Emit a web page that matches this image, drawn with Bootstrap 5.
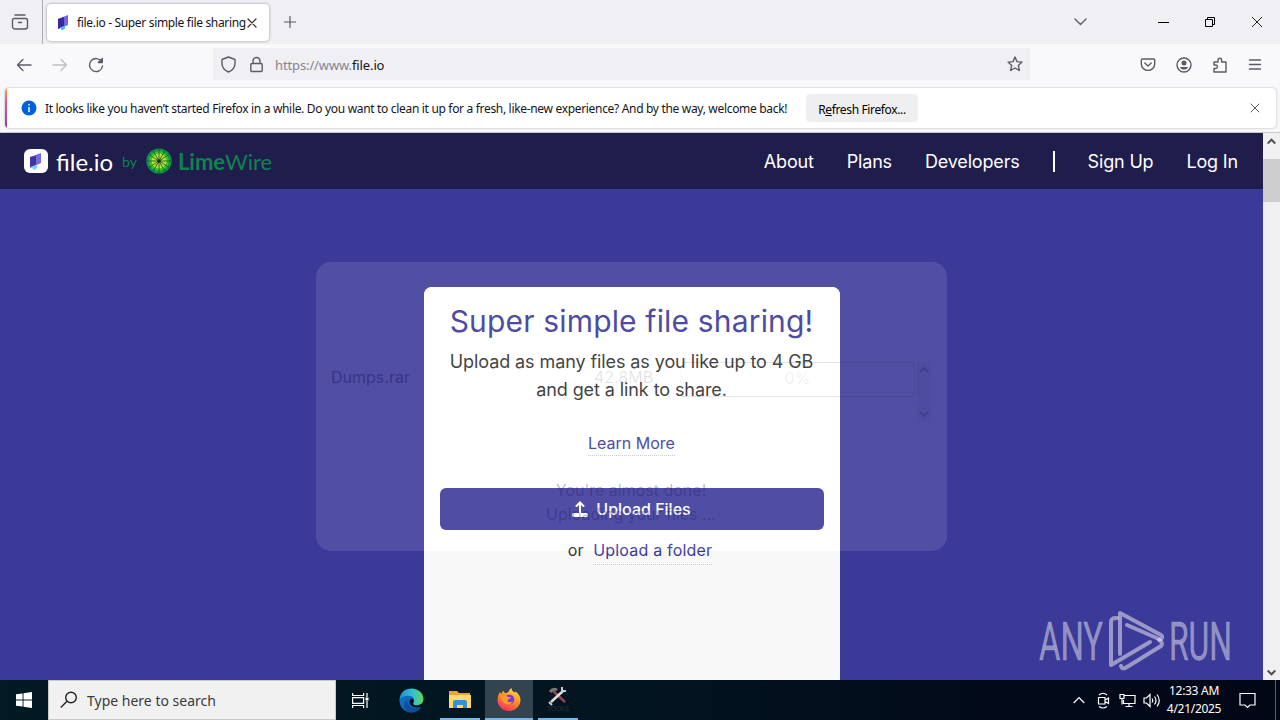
<!DOCTYPE html>
<html lang="en">
<head>
  <meta charset="UTF-8">
  <meta name="viewport" content="width=device-width, initial-scale=1.0">
  <title>file.io - Super simple file sharing</title>
  <link href="https://cdn.jsdelivr.net/npm/bootstrap@5.3.0/dist/css/bootstrap.min.css" rel="stylesheet">
  <style>
    body {
      width: 1280px;
      height: 720px;
      overflow: hidden;
      font-family: "Noto Sans", sans-serif;
      font-size: 12px;
      color: #15141a;
    }
    svg { display: block; flex: none; }
    .ln { fill: none; stroke: #5b5b66; stroke-width: 1.4; stroke-linecap: round; stroke-linejoin: round; }

    /* Browser tabs */
    .tab-strip { height: 44px; background: #f0eff4; }
    .view-btn { width: 43px; padding-right: 2px; border-right: 1px solid #aaa9b2; }
    .tab-item {
      width: 222px; height: 37px; margin: 4px 0 0 4px; padding: 0 11px 0 8px;
      background: #fff; border-radius: 4px; box-shadow: 0 0 3px rgba(0, 0, 0, .4);
    }
    .tab-title { margin-left: 6px; width: 170px; letter-spacing: -.33px; padding-top: 1px; }
    .win-icons { padding-right: 17px; gap: 35px; }

    /* Toolbar */
    .tool-bar { height: 44px; background: #f9f9fb; padding: 0 17px 0 16px; }
    .nav-btns { width: 197px; gap: 20px; margin-bottom: 2px; }
    .url-box { width: 817px; height: 32px; background: #f0eff4; padding: 0 7px; margin-bottom: 4px; }
    .url-text { font-size: 13px; color: #85848d; letter-spacing: -.12px; padding: 3px 0 0 10px; }
    .tool-icons { gap: 20px; margin: 0 1px 2px 0; }

    /* Notification */
    .notice-wrap { height: 45px; background: #f7f7f9; padding: 0 4px 4px 5px; border-bottom: 1px solid #c9c9cf; }
    .notice {
      height: 40px; background: #fff; border-radius: 4px; padding-right: 16px;
      box-shadow: 0 0 2px rgba(0, 0, 0, .35); overflow: hidden;
    }
    .notice-stripe { width: 2px; height: 40px; background: linear-gradient(#ffa436, #e2528f 35%, #8146b8); }
    .notice-text { width: 743px; margin-left: 8px; white-space: nowrap; letter-spacing: -.32px; padding-top: 2px; }
    .refresh-btn {
      width: 112px; height: 28px; margin-left: 18px; font-size: 12px;
      background: #efeff1; border-radius: 4px; letter-spacing: -.36px;
    }

    /* Site */
    .site { height: 547px; }
    .web-view { width: 1263px; font-family: Inter, sans-serif; }
    .site-head { height: 56px; background: #1f1d4b; padding: 0 25px 0 24px; color: #fff; }
    .logo-box { width: 24px; height: 24px; background: #fff; border-radius: 6px; }
    .logo-name { font: 24px/24px Lato, sans-serif; margin: 2px 0 0 8px; width: 57px; }
    .green { color: #0e8350; font-family: Lato, sans-serif; }
    .lime-name { font-size: 22px; line-height: 24px; margin-left: 6px; padding-top: 1px; }
    .menu { font-size: 18px; gap: 33px; white-space: nowrap; letter-spacing: -.17px; }
    .menu-bar { width: 2px; height: 21px; background: #fff; }
    .hero { height: 491px; background: #3c3a98; }
    .share-box {
      width: 416px; height: 420px; margin-top: 98px; padding: 0 16px;
      background: #f8f8f8; border-radius: 8px 8px 0 0; color: #2d2d2d;
    }
    .share-top { height: 264px; margin: 0 -16px; padding: 16px 16px 0; background: #fff; border-radius: 8px 8px 0 0; }
    .share-top h1 { font-size: 30px; line-height: 36px; color: #37359a; margin: 0 0 9px; letter-spacing: .17px; white-space: nowrap; }
    .share-top p { font-size: 18px; line-height: 28px; margin: 0 0 27px; white-space: nowrap; letter-spacing: -.09px; }
    .dotted { font-size: 16px; color: #37359a; border-bottom: 1px dotted #c4c4d6; line-height: 24px; text-decoration: none; }
    .up-btn { height: 42px; margin-top: 32px; background: #3b3999; color: #fff; border-radius: 6px; font-size: 16px; font-weight: 500; }
    .or-row { margin: -15px -17px 0 0; font-size: 16px; line-height: 28px; letter-spacing: .2px; }
    .or-row .dotted { line-height: 27px; }

    /* Fading upload panel over the card */
    .fade-panel {
      top: 73px; left: 316px; width: 631px; height: 289px; border-radius: 15px;
      background: rgba(255, 255, 255, .11); color: rgba(30, 24, 110, .5); font-size: 16px;
      padding: 100px 16px 0 15px;
    }
    .fade-row { height: 60px; }
    .size-cell { color: rgba(20, 20, 30, .13); }
    .bar-cell { width: 235px; height: 35px; border: 1px solid rgba(20, 15, 50, .11); border-left-color: rgba(20, 15, 50, .02); border-radius: 4px; color: rgba(20, 20, 30, .08); padding-bottom: 3px; }
    .fade-scroll { width: 14px; height: 60px; background: rgba(20, 15, 90, .04); }
    .fade-msg { margin-top: 56px; line-height: 24px; color: rgba(20, 15, 80, .3); }
    .watermark { right: 28px; bottom: 6px; overflow: visible; }

    .scroll-track { width: 17px; background: #f0f0f0; }
    .scroll-thumb { height: 43px; background: #cdcdcd; margin-top: 9px; }

    /* Taskbar */
    .task-bar { height: 40px; background: linear-gradient(90deg, #021a23, #02141f 50%, #020a1a 78%, #020716); color: #fff; }
    .start-btn { width: 48px; }
    .search-box { width: 288px; height: 40px; background: #f1f1f1; border: 1px solid #c8c8c8; color: #3a3a3a; font-size: 14px; padding-left: 11px; gap: 9px; }
    .task-item { width: 48px; height: 40px; }
    .running { width: 40px; border-bottom: 2px solid #76b9ed; }
    .on { width: 48px; background: #33444e; }
    .clock { width: 64px; font-size: 12px; line-height: 18px; letter-spacing: -.3px; }
    .desk-edge { width: 1px; height: 40px; background: #59606b; }
  </style>
</head>
<body class="d-flex flex-column">

  <!-- Tabs -->
  <div class="tab-strip d-flex">
    <div class="view-btn d-flex align-items-center justify-content-center">
      <svg width="18" height="18" viewBox="0 0 18 18" class="ln"><path d="M4 2h10M3.500 5.500h11a2 2 0 0 1 2 2v6a2.500 2.500 0 0 1-2.500 2.500h-10a2.500 2.500 0 0 1-2.500-2.500v-6a2 2 0 0 1 2-2zM7.500 9.500h3"/></svg>
    </div>
    <div class="tab-item d-flex align-items-center">
      <svg width="16" height="18" viewBox="0 0 16 18"><path d="M3 5l10-4v10l-10 4z" fill="#7a62dd"/><path d="M3 5l6-2v9l-6 3z" fill="#39279b"/><path d="M5 13.500l5-2v3l-3 2z" fill="#45b7e8"/></svg>
      <span class="tab-title text-nowrap">file.io - Super simple file sharing</span>
      <svg width="10" height="10" viewBox="0 0 10 10" class="ln" style="stroke:#333;stroke-width:1.200"><path d="M1 1l8 8M9 1l-8 8"/></svg>
    </div>
    <div class="d-flex align-items-center" style="padding-left:15px">
      <svg width="12" height="12" viewBox="0 0 12 12" class="ln" style="stroke-width:1.200"><path d="M6 .5v11M.5 6h11"/></svg>
    </div>
    <div class="win-icons d-flex align-items-center ms-auto">
      <svg width="13" height="8" viewBox="0 0 13 8" class="ln" style="margin-right:36px"><path d="M1 1l5.500 5.500L12 1"/></svg>
      <svg width="11" height="11" viewBox="0 0 11 11"><path d="M0 5.500h11" stroke="#000"/></svg>
      <svg width="12" height="12" viewBox="0 0 12 12" fill="none" stroke="#000"><path d="M1.500 3.500h7v7h-7zM3.500 3.500v-2h7v7h-2"/></svg>
      <svg width="12" height="12" viewBox="0 0 12 12" stroke="#222"><path d="M1 1l10 10M11 1L1 11"/></svg>
    </div>
  </div>

  <!-- Toolbar -->
  <div class="tool-bar d-flex align-items-center">
    <div class="nav-btns d-flex align-items-center">
      <svg width="16" height="16" viewBox="0 0 16 16" class="ln"><path d="M15 8H1.500M7 2.500L1.500 8 7 13.500"/></svg>
      <svg width="16" height="16" viewBox="0 0 16 16" class="ln" style="stroke:#bfbfc4"><path d="M1 8h13.500M9 2.500L14.500 8 9 13.500"/></svg>
      <svg width="16" height="16" viewBox="0 0 16 16" class="ln"><path d="M13.800 5A6.500 6.500 0 1 0 14.500 9M14.300 1.500v4H10.300z"/></svg>
    </div>
    <div class="url-box d-flex align-items-center">
      <svg width="17" height="17" viewBox="0 0 17 17" class="ln"><path d="M8.500 1L15 3.500v4c0 4-3 7-6.500 8.500C5 14.500 2 11.500 2 7.500v-4z"/></svg>
      <svg width="17" height="17" viewBox="0 0 17 17" class="ln" style="margin-left:11px"><path d="M5 7.500V5a3.500 3.500 0 0 1 7 0v2.500M4 7.500h9a1.200 1.200 0 0 1 1.200 1.200v5.600a1.200 1.200 0 0 1-1.200 1.200H4a1.200 1.200 0 0 1-1.200-1.200V8.700A1.200 1.200 0 0 1 4 7.500z"/></svg>
      <span class="url-text">https://www.<span style="color:#15141a">file.io</span></span>
      <svg width="16" height="16" viewBox="0 0 16 16" class="ln ms-auto"><path d="M8 1l2 4.600 5 .5-3.700 3.300L12.400 14.500 8 12l-4.400 2.500 1.100-5.100L1 6.100l5-.5z"/></svg>
    </div>
    <div class="tool-icons d-flex align-items-center ms-auto">
      <svg width="16" height="16" viewBox="0 0 16 16" class="ln"><path d="M2.500 2h11a1.200 1.200 0 0 1 1.200 1.200v3.500a6.700 6.700 0 0 1-13.400 0V3.200a1.200 1.200 0 0 1 1.200-1.200zM4.800 6L8 9l3.200-3"/></svg>
      <svg width="16" height="16" viewBox="0 0 16 16" class="ln"><circle cx="8" cy="8" r="7"/><circle cx="8" cy="6" r="2.500" fill="#5b5b66" stroke="none"/><path d="M4 10h8c-.5 2-2 2.500-4 2.500S4.500 12 4 10z" fill="#5b5b66" stroke="none"/></svg>
      <svg width="16" height="16" viewBox="0 0 16 16" class="ln"><path d="M2 5h4V3a1.800 1.800 0 0 1 3.600 0v2H14v10H2v-3.500h1.700a1.700 1.700 0 0 0 0-3.500H2z"/></svg>
      <svg width="14" height="14" viewBox="0 0 14 14" class="ln"><path d="M1.500 2h11M1.500 6.500h11M1.500 11h11"/></svg>
    </div>
  </div>

  <!-- Notification -->
  <div class="notice-wrap">
    <div class="notice d-flex align-items-center">
      <div class="notice-stripe"></div>
      <svg width="16" height="16" viewBox="0 0 16 16" style="margin-left:14px"><circle cx="8" cy="8" r="7.500" fill="#0060df"/><path d="M8 7v5M8 4v1.600" stroke="#fff" stroke-width="1.500"/></svg>
      <span class="notice-text">It looks like you haven’t started Firefox in a while. Do you want to clean it up for a fresh, like-new experience? And by the way, welcome back!</span>
      <button type="button" class="refresh-btn border-0 p-0 pt-1">R<u>e</u>fresh Firefox...</button>
      <svg width="10" height="10" viewBox="0 0 10 10" class="ln ms-auto" style="stroke-width:1"><path d="M1 1l8 8M9 1L1 9"/></svg>
    </div>
  </div>

  <!-- Site -->
  <div class="site d-flex">
    <div class="web-view">
      <div class="site-head d-flex align-items-center">
        <div class="logo-box d-flex align-items-center justify-content-center">
          <svg width="12" height="17" viewBox="0 0 12 17"><path d="M0 4l11-4v10L0 15z" fill="#7569e4"/><path d="M0 4l6-1v9l-6 2z" fill="#44369f"/><path d="M1 14l6-2.500V15l-3 2z" fill="#78d6ef"/></svg>
        </div>
        <span class="logo-name">file.io</span>
        <span class="green" style="font-size:14px;margin-left:9px">by</span>
        <svg width="26" height="26" viewBox="-13 -13 26 26" style="margin-left:9px">
          <circle r="11" fill="#38c520"/><circle r="7.500" fill="#b4e337"/>
          <circle r="11.300" fill="none" stroke="#129447" stroke-width="2.600"/>
          <path d="M0-12V12M-12 0H12M-10-6.500L10 6.500M-10 6.500L10-6.500M-6-10.500L6 10.500M-6 10.500L6-10.500" stroke="#154b2b" stroke-width=".8"/>
          <circle r="1.800" fill="#1c3020"/>
        </svg>
        <span class="green lime-name"><b>Lime</b>Wire</span>
        <div class="menu d-flex align-items-center ms-auto">
          <span>About</span>
          <span>Plans</span>
          <span>Developers</span>
          <div class="menu-bar"></div>
          <span>Sign Up</span>
          <span>Log In</span>
        </div>
      </div>

      <div class="hero position-relative overflow-hidden d-flex justify-content-center align-items-start">
        <div class="share-box text-center">
          <div class="share-top">
            <h1 class="fw-normal">Super simple file sharing!</h1>
            <p>Upload as many files as you like up to 4 GB<br>and get a link to share.</p>
            <a class="dotted d-inline-block" href="#">Learn More</a>
            <div class="up-btn d-flex align-items-center justify-content-center gap-2">
              <svg width="16" height="17" viewBox="0 0 16 17" fill="none" stroke="#fff" stroke-linecap="round"><path d="M8 12V2M4.500 5L8 1.500 11.500 5" stroke-width="2"/><path d="M2 14h12" stroke-width="4"/></svg>
              <span>Upload Files</span>
            </div>
          </div>
          <div class="or-row position-relative">or&nbsp; <a class="dotted d-inline-block" href="#">Upload a folder</a></div>
        </div>

        <div class="fade-panel position-absolute">
          <div class="fade-row d-flex">
            <span style="width:263px;line-height:31px">Dumps.rar</span>
            <span class="size-cell" style="width:86px;line-height:31px">42.8MB</span>
            <div class="bar-cell d-flex align-items-center justify-content-center">0%</div>
            <div class="fade-scroll d-flex flex-column justify-content-between align-items-center ms-auto py-1">
              <svg width="10" height="7" viewBox="0 0 10 7" fill="none" stroke="#3c3a88" stroke-width="1.500"><path d="M1 6l4-4 4 4"/></svg>
              <svg width="10" height="7" viewBox="0 0 10 7" fill="none" stroke="#3c3a88" stroke-width="1.500"><path d="M1 1l4 4 4-4"/></svg>
            </div>
          </div>
          <div class="fade-msg text-center">You're almost done!<br>Uploading your files ...</div>
        </div>

        <svg class="watermark position-absolute" width="198" height="64" viewBox="0 0 198 64" fill="#fff" fill-opacity=".45" font-family="Roboto, sans-serif" font-size="53">
          <g stroke="#fff" stroke-opacity=".2" stroke-width=".8">
            <text x="2" y="50" textLength="64" lengthAdjust="spacingAndGlyphs">ANY</text>
            <text x="132" y="50" textLength="63" lengthAdjust="spacingAndGlyphs">RUN</text>
          </g>
          <g fill="none" stroke="#fff" stroke-opacity=".48" stroke-width="4" stroke-linejoin="round" stroke-linecap="round">
            <path d="M80 8c-5 0-6 1-6 5v42l39-23"/>
            <path d="M83 44V3l41 22c2 2 1 5-2 4L90 15"/>
            <path d="M84 56c1 3 3 3 6 1l34-21c2-2 1-4-2-6"/>
          </g>
        </svg>
      </div>
    </div>

    <div class="scroll-track d-flex flex-column align-items-center">
      <svg width="9" height="7" viewBox="0 0 9 7" fill="none" stroke="#505050" stroke-width="2" style="margin-top:5px;margin-bottom:5px"><path d="M.7 5.500l3.800-3.800 3.800 3.800"/></svg>
      <div class="scroll-thumb w-100"></div>
      <svg width="9" height="7" viewBox="0 0 9 7" fill="none" stroke="#505050" stroke-width="2" class="mt-auto mb-1"><path d="M.7 1.500l3.800 3.800 3.800-3.800"/></svg>
    </div>
  </div>

  <!-- Taskbar -->
  <div class="task-bar d-flex align-items-center">
    <div class="start-btn d-flex justify-content-center">
      <svg width="16" height="16" viewBox="0 0 16 16" fill="#fff"><path d="M0 2.300l6.600-.9v6.100H0zM7.500 1.200L16 0v7.500H7.500zM0 8.400h6.600v6.200L0 13.700zM7.500 8.400H16V16l-8.500-1.200z"/></svg>
    </div>
    <div class="search-box d-flex align-items-center">
      <svg width="18" height="18" viewBox="0 0 18 18" fill="none" stroke="#222" stroke-width="1.400"><circle cx="11" cy="6.500" r="5.300"/><path d="M7 10.300L.8 16.500"/></svg>
      <span>Type here to search</span>
    </div>
    <div class="task-item d-flex align-items-center justify-content-center">
      <svg width="17" height="17" viewBox="0 0 17 17" fill="none" stroke="#fff" stroke-width="1.200"><path d="M.6 1v2.500h11V1M.6 16v-2.500h11V16M.6 5.600h11v5.800H.6zM15 1v4M15 9v7"/><path d="M13.500 5.500h3v3h-3z" fill="#fff" stroke="none"/></svg>
    </div>
    <div class="task-item d-flex align-items-center justify-content-center" style="width:54px;margin-right:2px">
      <svg width="25" height="25" viewBox="0 0 24 24">
        <defs>
          <linearGradient id="edgeTop" x1="0" x2="1"><stop offset="0" stop-color="#1b8fd8"/><stop offset=".55" stop-color="#35bfd0"/><stop offset="1" stop-color="#62d657"/></linearGradient>
        </defs>
        <path d="M.5 12C.5 6 5 3 12 3l8 17c-2 2-5 3.500-8 3.500C5.500 23.500.5 18.500.5 12z" fill="#0f6cbd"/>
        <path d="M.6 11C1 4 6 .5 12 .5c7 0 11.500 5 11.500 10 0 4-3 6-6.500 6-3 0-4-1-3-2.500 2-3-.5-6.500-5-6.500C5 7.500 2 9 .6 11z" fill="url(#edgeTop)"/>
        <path d="M8 11c-1 6 5 10 13.500 7-3 5-8 6-12 5-6-3-6-9-1.500-12z" fill="#124d9c"/>
        <path d="M12.500 10c2 1 2 3 1.200 4.200-.8 1.500.5 2.500 3.300 2.500 2 0 3.500-.4 5-1.500l-.5 2.500c-4 2-10 1-11.500-3-.6-2.500.8-4.500 2.500-4.700z" fill="#02151f"/>
      </svg>
    </div>
    <div class="task-item running d-flex align-items-center justify-content-center" style="margin-right:5px">
      <svg width="22" height="19" viewBox="0 0 22 19"><path d="M0 1h8l2 2h11v15H0z" fill="#e9a82b"/><path d="M0 5h22v13H0z" fill="#ffd96b"/><path d="M4 18v-6q0-2 2-2h10q2 0 2 2v6h-4v-3H8v3z" fill="#3a91cf"/></svg>
    </div>
    <div class="task-item running on d-flex align-items-center justify-content-center">
      <svg width="24" height="24" viewBox="0 0 24 24">
        <defs>
          <linearGradient id="foxFire" x1=".8" y1="0" x2=".3" y2="1"><stop offset="0" stop-color="#ffe14a"/><stop offset=".5" stop-color="#ff8a25"/><stop offset="1" stop-color="#f5305f"/></linearGradient>
        </defs>
        <path d="M3 5l1.500 2L6 3.500 8 6c2 0 3-.5 4-2 .5-1.500 1.500-2.500 2.500-3 0 2 1 3 3 4.500l1-1C22 7 23.500 10 23.500 13A11.500 11 0 0 1 .5 13C.5 10 1.500 7 3 5z" fill="url(#foxFire)"/>
        <circle cx="12.500" cy="12.500" r="4.800" fill="#7a3bd5"/>
        <path d="M3 9c3-2 6-1 8 1l3 .5c-.5 1.500-3 1.500-3.500 3 .5 2 3.500 2 5.500 1-2 4-8 4-10 0z" fill="#ff9a2a"/>
      </svg>
    </div>
    <div class="task-item running d-flex align-items-center justify-content-center" style="margin-left:5px">
      <svg width="24" height="26" viewBox="0 0 24 26" fill="none"><path d="M7 5l12 11" stroke="#98424b" stroke-width="2.500"/><path d="M4 6q3-4 7-2" stroke="#777" stroke-width="3"/><path d="M5 16L17 5" stroke="#ddd" stroke-width="2.500"/><path d="M16 1v4h4M3 16l3 3" stroke="#ccc" stroke-width="2"/><text x="1" y="25" font-size="7" fill="#27343d" textLength="22">TOOLS</text></svg>
    </div>

    <div class="d-flex align-items-center ms-auto">
      <svg width="12" height="8" viewBox="0 0 12 8" fill="none" stroke="#fff" stroke-width="1.200"><path d="M.7 7L6 1.500 11.300 7"/></svg>
      <svg width="13" height="17" viewBox="0 0 13 17" fill="none" stroke="#fff" stroke-width="1.200" style="margin-left:12px"><path d="M1.500 5.500h6.500v6.500H1.500zM8 8l3.500-2v5.500L8 9.500M2 3q4-3.500 8 0M2 14.500q4 3 8 0"/></svg>
      <svg width="17" height="15" viewBox="0 0 17 15" fill="none" stroke="#fff" stroke-width="1.200" style="margin-left:9px"><path d="M5.500 2.500h10.500v8H4.500V7M10 10.500v3M6.500 13.500h7M1 1.500h4v4H1zM3 5.500v6"/></svg>
      <svg width="17" height="15" viewBox="0 0 17 15" fill="none" stroke="#fff" stroke-width="1.200" style="margin-left:7px"><path d="M1 5h2.500L7 1.500v12L3.500 10H1zM9 5.500q1.500 2 0 4M11.500 3.500q3 4 0 8M14 1.500q4.500 6 0 12"/></svg>
      <div class="clock text-center" style="margin-left:2px">12:33 AM<br>4/21/2025</div>
      <svg width="17" height="17" viewBox="0 0 17 17" fill="none" stroke="#fff" stroke-width="1.200" style="margin-left:13px"><path d="M1 1.500h15v11.500h-5L8.500 15.500 6 13H1z"/></svg>
      <div class="desk-edge" style="margin-left:19px;margin-right:4px"></div>
    </div>
  </div>

  <script src="https://cdn.jsdelivr.net/npm/bootstrap@5.3.0/dist/js/bootstrap.bundle.min.js"></script>
</body>
</html>
